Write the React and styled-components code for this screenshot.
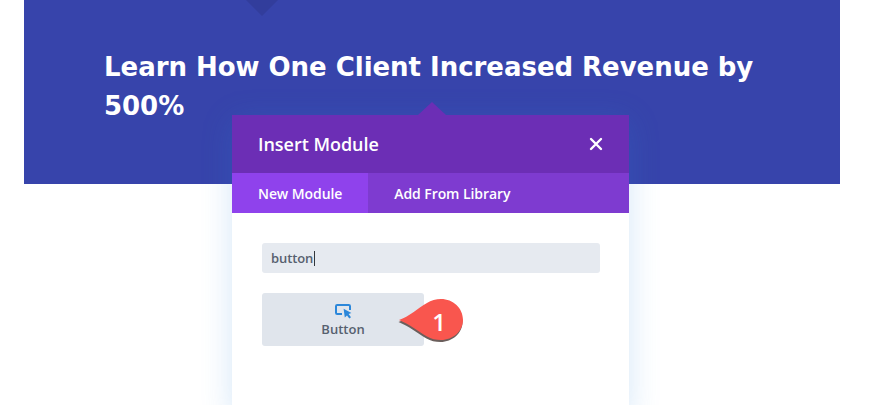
import React from "react"
import styled, { createGlobalStyle } from "styled-components"

const GlobalStyle = createGlobalStyle`
  html, body { margin: 0; padding: 0; background: #fff; }
  body { width: 880px; height: 405px; overflow: hidden; font-family: "Open Sans", "Liberation Sans", sans-serif; }
`

const calloutPath = "M1 23 C11 20 20 11 29 6 C33 3.5 38 2 43 2 C55 2 65 11 65 23 C65 34 55 43 43 43 C38 43 33 42 29 39.5 C20 34 11 27 1 23 Z"

function CloseIcon() {
  return (
    <svg width="14" height="14" viewBox="0 0 14 14">
      <path d="M2 2 L12 12 M12 2 L2 12" stroke="#fff" strokeWidth="2.4" strokeLinecap="round" />
    </svg>
  )
}

function ButtonIcon() {
  return (
    <svg width="17" height="15" viewBox="0 0 17 15">
      <path d="M7 10 H2.2 C1.5 10 1 9.5 1 8.8 V2.2 C1 1.5 1.5 1 2.2 1 H13.8 C14.5 1 15 1.5 15 2.2 V6" fill="none" stroke="#2b87da" strokeWidth="2" />
      <path d="M8.6 4.8 L16.4 9 L13.6 10 L16 13.2 L14.3 14.6 L12 11.4 L9.8 13.6 Z" fill="#2b87da" />
    </svg>
  )
}

export default function App() {
  return (
    <Page>
      <GlobalStyle />
      <Hero>
        <HeroNotch />
        <Headline>Learn How One Client Increased Revenue by 500%</Headline>
      </Hero>
      <Modal>
        <ModalArrow />
        <ModalHeader>
          <ModalTitle>Insert Module</ModalTitle>
          <CloseButton><CloseIcon /></CloseButton>
        </ModalHeader>
        <Tabs>
          <Tab $active>New Module</Tab>
          <Tab>Add From Library</Tab>
        </Tabs>
        <ModalBody>
          <SearchBox>button<Caret /></SearchBox>
          <ModuleCard>
            <ButtonIcon />
            <ModuleLabel>Button</ModuleLabel>
            <Callout>
              <svg width="68" height="48" viewBox="0 0 68 48">
                <path d={calloutPath} fill="#6b5f5c" transform="translate(-0.5 2)" />
                <path d={calloutPath} fill="#f9564e" />
              </svg>
              <CalloutNumber>1</CalloutNumber>
            </Callout>
          </ModuleCard>
        </ModalBody>
      </Modal>
    </Page>
  )
}

const Page = styled.div`
  position: relative;
  width: 880px;
  height: 405px;
  overflow: hidden;
  padding: 0 40px 0 24px;
  box-sizing: border-box;
`
const Hero = styled.section`
  position: relative;
  height: 184px;
  box-sizing: border-box;
  padding: 48px 60px 0 80px;
  background: #3744ab;
`
const HeroNotch = styled.div`
  position: absolute;
  top: 0;
  left: 222px;
  border-left: 16px solid transparent;
  border-right: 16px solid transparent;
  border-top: 16px solid #323d9c;
`
const Headline = styled.h1`
  margin: 0;
  font-family: "DejaVu Sans", "Liberation Sans", sans-serif;
  font-size: 26px;
  line-height: 39px;
  font-weight: 700;
  letter-spacing: -0.03px;
  color: #fff;
`
const Modal = styled.div`
  position: absolute;
  top: 115px;
  left: 232px;
  width: 397px;
  height: 300px;
  background: #fff;
  box-shadow: 0 5px 30px rgba(43, 135, 218, 0.2);
`
const ModalArrow = styled.div`
  position: absolute;
  top: -13px;
  left: 186px;
  border-left: 14px solid transparent;
  border-right: 14px solid transparent;
  border-bottom: 13px solid #6c2eb5;
`
const ModalHeader = styled.div`
  display: flex;
  align-items: center;
  justify-content: space-between;
  height: 58px;
  padding: 0 26px;
  background: #6c2eb5;
`
const ModalTitle = styled.div`
  font-size: 18px;
  font-weight: 600;
  letter-spacing: -0.03px;
  color: #fff;
`
const CloseButton = styled.div`
  display: flex;
`
const Tabs = styled.div`
  display: flex;
  height: 40px;
  background: #7e3bd0;
`
const Tab = styled.div`
  display: flex;
  align-items: center;
  padding: 0 26px;
  font-size: 14px;
  font-weight: 600;
  letter-spacing: -0.08px;
  color: #fff;
  background: ${p => (p.$active ? "#8f42ec" : "transparent")};
`
const ModalBody = styled.div`
  display: flex;
  flex-direction: column;
  align-items: flex-start;
  gap: 20px;
  padding: 30px 29px 0 30px;
`
const SearchBox = styled.div`
  display: flex;
  align-items: center;
  width: 100%;
  height: 30px;
  box-sizing: border-box;
  padding: 0 9px;
  border-radius: 3px;
  background: #e6eaf0;
  font-size: 13px;
  font-weight: 600;
  letter-spacing: -0.1px;
  color: #56606f;
`
const Caret = styled.span`
  width: 1px;
  height: 15px;
  margin-left: 1px;
  background: #32373c;
`
const ModuleCard = styled.div`
  position: relative;
  display: flex;
  flex-direction: column;
  align-items: center;
  gap: 2px;
  width: 162px;
  height: 53px;
  box-sizing: border-box;
  padding-top: 11px;
  border-radius: 3px;
  background: #e0e5ec;
`
const ModuleLabel = styled.div`
  font-size: 13px;
  font-weight: 600;
  line-height: 17px;
  color: #56606f;
`
const Callout = styled.div`
  position: absolute;
  top: 4px;
  left: 136px;
  width: 68px;
  height: 48px;
`
const CalloutNumber = styled.span`
  position: absolute;
  top: 8px;
  left: 28px;
  width: 26px;
  text-align: center;
  font-size: 24px;
  line-height: 34px;
  font-weight: 600;
  color: #fff;
`
